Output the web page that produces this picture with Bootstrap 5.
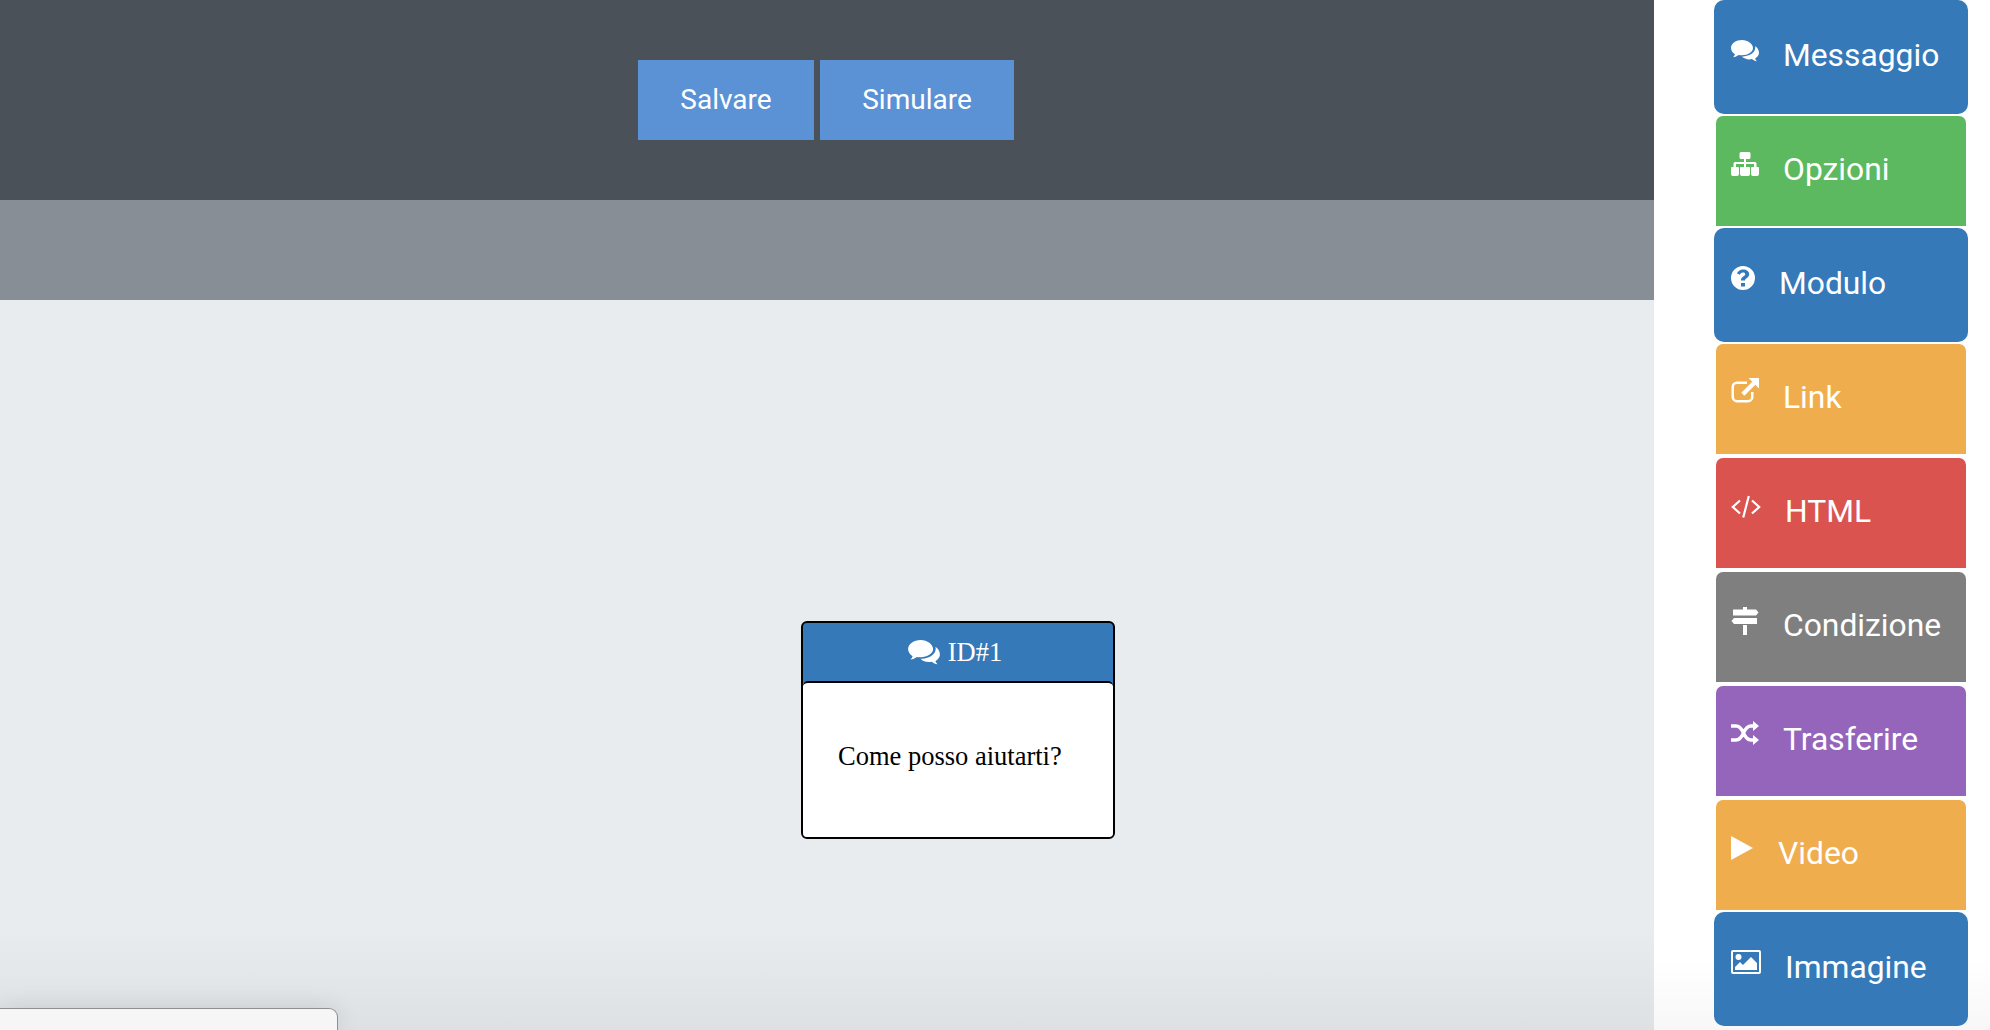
<!DOCTYPE html>
<html lang="it">
<head>
<meta charset="utf-8">
<title>Editor</title>
<link href="https://cdn.jsdelivr.net/npm/bootstrap@5.3.0/dist/css/bootstrap.min.css" rel="stylesheet">
<style>
html,body{height:1030px;overflow:hidden;background:#fff;font-family:Roboto,sans-serif}
.shell{height:1030px;overflow:hidden}
.stage{width:1654px;flex:none}
.top-band{height:200px;background:#4a5159;padding:60px 0 0 638px;gap:6px}
.act-btn{height:80px;border-radius:0;border:0;background:#5a92d5;color:#fff;font:400 28px Roboto,sans-serif;padding:0 0 2px}
.act-save{width:176px}
.act-sim{width:194px}
.sub-band{height:100px;background:#878e95}
.canvas-area{height:730px;background:linear-gradient(to bottom,#e8ecef 0,#e8ecef 630px,#dee1e4 730px)}
.flow-node{position:absolute;left:801px;top:621px;width:314px;height:218px;border:2px solid #000;border-radius:6px;background:#3579b8;font-family:"Liberation Serif",serif;overflow:hidden}
.node-head{height:58px;color:#fff;font-size:26.500px;gap:8px;padding:1px 6px 0 0}
.node-body{height:156px;background:#fff;border-top:2px solid #000;border-radius:5px 5px 0 0;padding-left:35px;padding-top:58px;font-size:26.500px;line-height:30px;color:#000}
.dock{position:absolute;left:0;top:1008px;width:338px;height:22px;background:#f6f6f6;border:1px solid #8f8f8f;border-left:0;border-bottom:0;border-radius:0 9px 0 0;box-shadow:0 0 24px rgba(0,0,0,.12)}
.tools{width:336px;padding-left:60px;background:linear-gradient(to bottom,#fff 0,#fff 960px,#f7f7f7 1030px)}
.tool{display:flex;align-items:flex-start;gap:24px;width:250px;height:110px;margin:0 0 4px 2px;padding:35px 0 0 15px;border-radius:7px 7px 0 0;color:#fff;font-size:31.800px;line-height:35px}
.tool span{margin-top:1px}
.tool svg{flex:none;fill:#fff;display:block}
.tool.tone-blue{width:254px;height:114px;margin-left:0;padding:37px 0 0 17px;border-radius:10px;background:#3579b8}
.tone-green{background:#5cb95f}
.tone-amber{background:#f0ad4e}
.tone-red{background:#da534f}
.tone-gray{background:#7f7f7f}
.tone-purple{background:#9565bc}
.t-msg,.t-opt,.t-mod,.t-vid{margin-bottom:2px}
.t-msg svg{margin-top:3px}
.t-opt svg,.t-mod svg,.t-vid svg,.t-img svg{margin-top:1px}
.t-lnk svg{margin-top:-1px}
.t-htm svg{margin-top:2px}
.tool.t-end{height:2px;padding:0;border-radius:6px 6px 0 0;margin:0}
</style>
</head>
<body>
<div class="shell d-flex position-relative">
  <div class="stage">
    <div class="top-band d-flex">
      <button class="btn act-btn act-save" type="button">Salvare</button>
      <button class="btn act-btn act-sim" type="button">Simulare</button>
    </div>
    <div class="sub-band"></div>
    <div class="canvas-area"></div>
  </div>
  <div class="flow-node">
    <div class="node-head d-flex align-items-center justify-content-center">
      <svg width="32" height="25" viewBox="0 0 28 22" fill="#fff"><path d="M11 0C5 0 0 3.500 0 8c0 2.600 1.500 4.800 4 6.300-.4 1.100-1 2-1.900 2.900 2-.3 4-1.100 5.500-2.300 1.100.2 2.200.3 3.400.3 6 0 11-3.200 11-7.200S17 0 11 0z"/><path d="M24 6c.2.500.3 1 .3 1.600 0 5-5.700 8.500-12 8.800-.5 0-1 .1-1.400.1 1.800 1.800 4.400 2.900 7.300 2.900.9 0 1.800-.1 2.700-.3 1.500 1.200 3 1.900 5 2.200-.8-.9-1.500-1.800-1.800-2.900C26.500 17 28 15 28 12.700c0-2.700-1.600-5.100-4-6.700z"/></svg>
      <span>ID#1</span>
    </div>
    <div class="node-body">Come posso aiutarti?</div>
  </div>
  <div class="dock"></div>
  <div class="tools">
    <div class="tool tone-blue t-msg"><svg width="28" height="22" viewBox="0 0 28 22"><path d="M11 0C5 0 0 3.500 0 8c0 2.600 1.500 4.800 4 6.300-.4 1.100-1 2-1.900 2.900 2-.3 4-1.100 5.500-2.300 1.100.2 2.200.3 3.400.3 6 0 11-3.200 11-7.200S17 0 11 0z"/><path d="M24 6c.2.500.3 1 .3 1.600 0 5-5.700 8.500-12 8.800-.5 0-1 .1-1.400.1 1.800 1.800 4.400 2.900 7.300 2.900.9 0 1.800-.1 2.700-.3 1.500 1.200 3 1.900 5 2.200-.8-.9-1.500-1.800-1.800-2.900C26.500 17 28 15 28 12.700c0-2.700-1.600-5.100-4-6.700z"/></svg><span>Messaggio</span></div>
    <div class="tool tone-green t-opt"><svg width="28" height="24" viewBox="0 0 28 24"><path d="M10 0h8a1.500 1.500 0 0 1 1.500 1.500v4A1.500 1.500 0 0 1 18 7h-3v3h9a1.500 1.500 0 0 1 1.500 1.500V15H27a1 1 0 0 1 1 1v6a2 2 0 0 1-2 2h-4a2 2 0 0 1-2-2v-6a1 1 0 0 1 1-1h2v-3H15v3h3a1 1 0 0 1 1 1v6a2 2 0 0 1-2 2h-6a2 2 0 0 1-2-2v-6a1 1 0 0 1 1-1h3v-3H5v3h2a1 1 0 0 1 1 1v6a2 2 0 0 1-2 2H2a2 2 0 0 1-2-2v-6a1 1 0 0 1 1-1h1.500v-3.500A1.500 1.500 0 0 1 4 10h9V7h-3a1.500 1.500 0 0 1-1.500-1.500v-4A1.500 1.500 0 0 1 10 0z"/></svg><span>Opzioni</span></div>
    <div class="tool tone-blue t-mod"><svg width="24" height="24" viewBox="0 0 24 24"><path fill-rule="evenodd" d="M12 0a12 12 0 1 0 0 24 12 12 0 0 0 0-24zm-2 17h4v3.500h-4zm2-13.500c-3 0-5.300 1.700-6 4l3 1.200c.4-1.200 1.500-2.100 3-2.100 1.300 0 2.200.7 2.200 1.600 0 1-.9 1.500-2 2.200-1.300.8-2.200 1.800-2.200 3.600v.5h4v-.3c0-.9.5-1.300 1.600-2 1.400-.9 2.600-2 2.600-4.100 0-2.800-2.700-4.600-6.200-4.600z"/></svg><span>Modulo</span></div>
    <div class="tool tone-amber t-lnk"><svg width="28" height="25" viewBox="0 0 28 25"><path d="M6 3.500h10v2.400H6a3 3 0 0 0-3 3v10a3 3 0 0 0 3 3h11a3 3 0 0 0 3-3v-5h2.500v5a5.500 5.500 0 0 1-5.500 5.500H6A5.500 5.500 0 0 1 .5 19V9A5.500 5.500 0 0 1 6 3.500z"/><path d="M17.500 0H28v10.500l-3.700-3.700-11 11-3-3 11-11z"/></svg><span>Link</span></div>
    <div class="tool tone-red t-htm"><svg width="30" height="24" viewBox="0 0 30 24"><path d="M9 5.500 1.800 12 9 18.500M21 5.500l7.200 6.500-7.200 6.500M17.800 1l-5.600 21.500" fill="none" stroke="#fff" stroke-width="2.200"/></svg><span>HTML</span></div>
    <div class="tool tone-gray t-con"><svg width="28" height="28" viewBox="0 0 28 28"><path d="M12 0h4v2.500h9l2.500 3L25 8.500H2v-6h10zM3 11h23v6H3L.5 14zM12 18h4v10h-4z"/></svg><span>Condizione</span></div>
    <div class="tool tone-purple t-tra"><svg width="28" height="24" viewBox="0 0 28 24"><path d="M0 5h5c3.500 0 5.500 2.500 7.500 7s4 7 7.500 7h3M0 19h5c3.500 0 5.500-2.500 7.500-7s4-7 7.500-7h3" fill="none" stroke="#fff" stroke-width="3.400"/><path d="M22 0l6 5-6 5zM22 14l6 5-6 5z"/></svg><span>Trasferire</span></div>
    <div class="tool tone-amber t-vid"><svg width="23" height="24" viewBox="0 0 23 24"><path d="M0 0l22 12L0 24z"/></svg><span>Video</span></div>
    <div class="tool tone-blue t-img"><svg width="30" height="24" viewBox="0 0 30 24"><path fill-rule="evenodd" d="M2 0h26a2 2 0 0 1 2 2v20a2 2 0 0 1-2 2H2a2 2 0 0 1-2-2V2a2 2 0 0 1 2-2zm0 2v20h26V2z"/><circle cx="7.500" cy="7" r="3"/><path d="M4 20v-3l5-5 3 3 8-8 6 6v7z"/></svg><span>Immagine</span></div>
    <div class="tool tone-green t-end"></div>
  </div>
</div>
</body>
</html>
